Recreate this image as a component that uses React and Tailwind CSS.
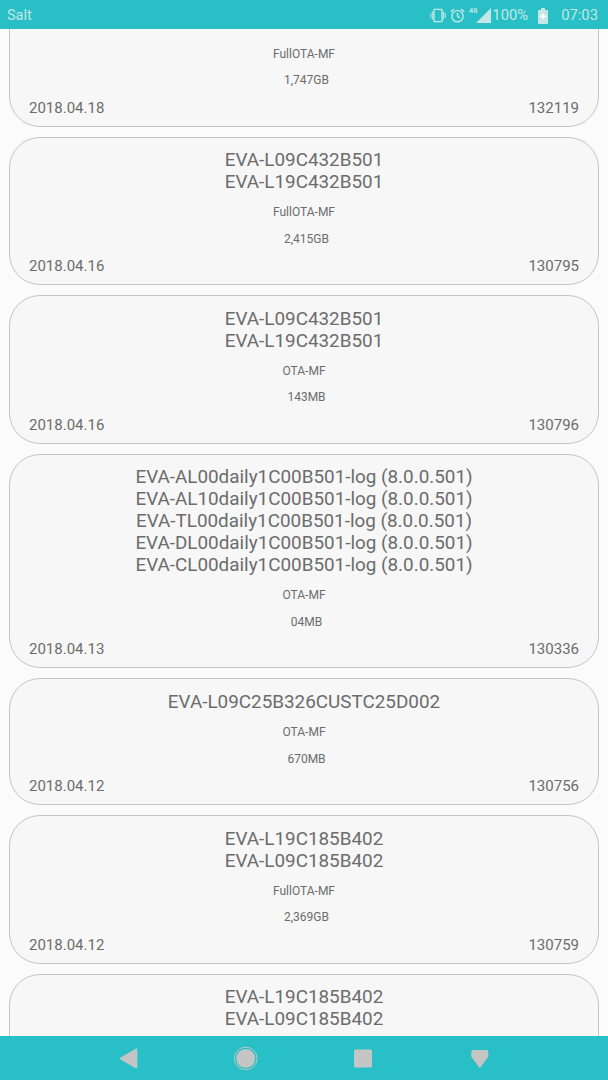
const updates = [
  { models: ['EVA-L19C185B402', 'EVA-L09C185B402'], type: 'FullOTA-MF', size: '1,747GB', date: '2018.04.18', id: '132119' },
  { models: ['EVA-L09C432B501', 'EVA-L19C432B501'], type: 'FullOTA-MF', size: '2,415GB', date: '2018.04.16', id: '130795' },
  { models: ['EVA-L09C432B501', 'EVA-L19C432B501'], type: 'OTA-MF', size: '143MB', date: '2018.04.16', id: '130796' },
  {
    models: [
      'EVA-AL00daily1C00B501-log (8.0.0.501)',
      'EVA-AL10daily1C00B501-log (8.0.0.501)',
      'EVA-TL00daily1C00B501-log (8.0.0.501)',
      'EVA-DL00daily1C00B501-log (8.0.0.501)',
      'EVA-CL00daily1C00B501-log (8.0.0.501)',
    ],
    type: 'OTA-MF', size: '04MB', date: '2018.04.13', id: '130336',
  },
  { models: ['EVA-L09C25B326CUSTC25D002'], type: 'OTA-MF', size: '670MB', date: '2018.04.12', id: '130756' },
  { models: ['EVA-L19C185B402', 'EVA-L09C185B402'], type: 'FullOTA-MF', size: '2,369GB', date: '2018.04.12', id: '130759' },
  { models: ['EVA-L19C185B402', 'EVA-L09C185B402'], type: 'OTA-MF', size: '143MB', date: '2018.04.12', id: '130760' },
];

function StatusBar() {
  return (
    <header className="relative z-10 flex h-[29px] shrink-0 items-center bg-[#28c0c6] pt-[2px] pl-[7px] pr-[10px] text-[14.5px] text-[#c4e6e5]">
      <span>Salt</span>
      <div className="ml-auto flex items-center">
        <svg className="h-[15px] w-[16px]" viewBox="0 0 16 15" fill="none" stroke="currentColor" strokeWidth="1.4">
          <rect x="4" y="1.4" width="8" height="12.2" rx="0.6" />
          <path d="M.8 5v5M2.4 3.6v7.8M13.6 3.6v7.8M15.2 5v5" strokeWidth="1" />
        </svg>
        <svg className="ml-[4px] h-[15px] w-[15px]" viewBox="0 0 15 15" fill="none" stroke="currentColor" strokeWidth="1.4">
          <circle cx="7.5" cy="8.2" r="5.6" />
          <path d="M7.5 5v3.4l2.4 1.4M.8 3.8l3.2-2.7M14.2 3.8l-3.2-2.7" />
        </svg>
        <span className="ml-[4px] mb-[8px] font-['Liberation_Mono',monospace] text-[7px] font-bold leading-none">4G</span>
        <svg className="-ml-px h-[15px] w-[15px]" viewBox="0 0 15 15" fill="currentColor">
          <path d="M15 0v15H0z" />
        </svg>
        <span className="ml-px text-[14.8px]">100%</span>
        <svg className="ml-[10px] h-[16px] w-[10px]" viewBox="0 0 10 16">
          <path fill="currentColor" d="M3 0h4v2h2.2c.5 0 .8.3.8.8v12.4c0 .5-.3.8-.8.8H.8c-.5 0-.8-.3-.8-.8V2.8c0-.5.3-.8.8-.8H3z" />
          <path d="M5 5.3v6M2 8.3h6" stroke="#fff" strokeWidth="1.5" />
        </svg>
        <span className="ml-[13px] text-[14.8px]">07:03</span>
      </div>
    </header>
  );
}

function UpdateCard({ models, type, size, date, id }) {
  return (
    <article className="shrink-0 rounded-[31px] border border-[#c4c4c4] bg-[#f7f7f7] px-[19px] pt-[11.4px] pb-[8.1px] text-center text-[#6c6c6c]">
      <div className="text-[18.88px] leading-[21.94px]">
        {models.map((model) => <div key={model}>{model}</div>)}
      </div>
      <div className="mt-[11.2px] text-[12px] leading-[16px]">{type}</div>
      <div className="mt-[10.5px] pl-[5px] text-[12px] leading-[16px]">{size}</div>
      <div className="mt-[10.6px] flex justify-between text-[15px] leading-[19px]">
        <span>{date}</span>
        <span>{id}</span>
      </div>
    </article>
  );
}

function NavBar() {
  return (
    <nav className="relative z-10 flex h-[44px] shrink-0 items-center justify-center gap-[93px] bg-[#28c0c6] text-[#c5c5c5]">
      <svg className="h-6 w-6" viewBox="0 0 24 24" fill="currentColor">
        <path d="M18.7 2.7c1-.5 1.600-.1 1.600.8v18c0 .9-.6 1.300-1.600.8L3.600 13.500c-.8-.5-.8-1.500 0-2z" />
      </svg>
      <svg className="h-6 w-6" viewBox="0 0 24 24">
        <circle cx="11.7" cy="12.5" r="9.5" fill="currentColor" />
        <circle cx="11.7" cy="12.5" r="11.3" fill="none" stroke="currentColor" strokeWidth="1" />
      </svg>
      <svg className="h-6 w-6" viewBox="0 0 24 24" fill="currentColor">
        <rect x="3" y="3.4" width="18" height="18" rx="1.5" />
      </svg>
      <svg className="h-6 w-6" viewBox="0 0 24 24" fill="currentColor">
        <path d="M5.300 4h13c1.300 0 2 .7 2 2v4.700L12.800 21c-.6.8-1.400.8-2 0L3.300 10.700V6c0-1.300.7-2 2-2z" />
      </svg>
    </nav>
  );
}

export default function App() {
  return (
    <div className="flex h-[1080px] w-[608px] flex-col overflow-hidden bg-[#fbfbfb] font-[Roboto,sans-serif]">
      <StatusBar />
      <main className="min-h-0 flex-1 overflow-hidden px-[9px]">
        <div className="-mt-[50.9px] flex flex-col gap-[10px]">
          {updates.map((update) => <UpdateCard key={update.id} {...update} />)}
        </div>
      </main>
      <NavBar />
    </div>
  );
}
